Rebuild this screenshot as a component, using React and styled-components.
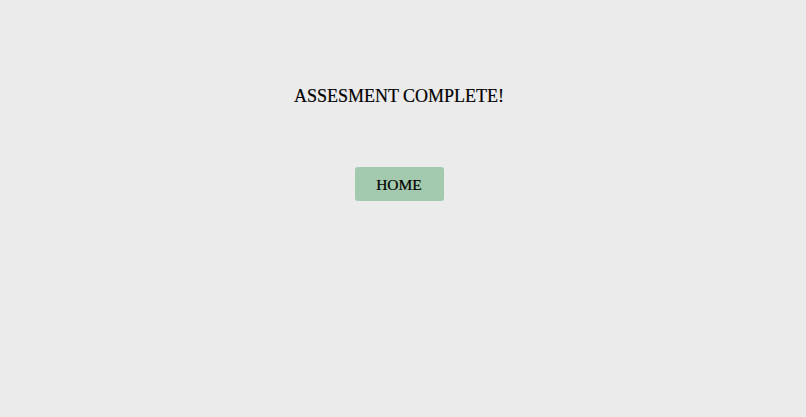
import React from "react";
import styled, { createGlobalStyle } from "styled-components";

const GlobalStyle = createGlobalStyle`
  html, body {
    margin: 0;
    padding: 0;
    background: #ebebeb;
    font-family: "Liberation Serif", "Times New Roman", serif;
  }
`;

const Page = styled.main`
  min-height: 417px;
  display: flex;
  flex-direction: column;
  align-items: center;
  padding: 86px 8px 0 0;
  box-sizing: border-box;
`;

const Title = styled.h1`
  margin: 0;
  font-size: 18px;
  font-weight: normal;
  color: #000;
  line-height: 20px;
  -webkit-text-stroke: 0.2px #000;
`;

const HomeButton = styled.button`
  margin-top: 61px;
  width: 89px;
  height: 34px;
  border: none;
  border-radius: 3px;
  background: #a3c9ae;
  font-family: "Liberation Serif", "Times New Roman", serif;
  font-size: 15.5px;
  color: #000;
  padding: 2px 0 0;
  cursor: pointer;
  -webkit-text-stroke: 0.2px #000;
`;

export default function App() {
  return (
    <>
      <GlobalStyle />
      <Page>
        <Title>ASSESMENT COMPLETE!</Title>
        <HomeButton>HOME</HomeButton>
      </Page>
    </>
  );
}
